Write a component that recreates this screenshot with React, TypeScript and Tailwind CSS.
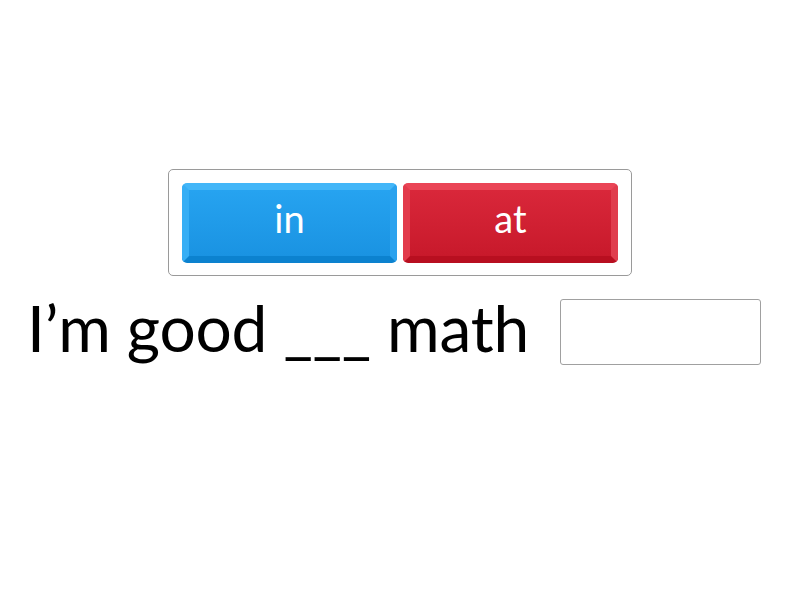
import React from 'react';

function Tile({ label, tone }: { label: string; tone: 'blue' | 'red' }) {
    const cls =
        tone === 'blue'
            ? 'bg-gradient-to-b from-[#26a3f0] to-[#1a93e2] border-t-[#43b6f8] border-l-[#36aef5] border-r-[#2aa2ee] border-b-[#0c82cf]'
            : 'bg-gradient-to-b from-[#d9273a] to-[#c8192b] border-t-[#ea4556] border-l-[#e23a4b] border-r-[#e03d4d] border-b-[#b80f20]';
    return (
        <button className={`w-[215px] h-[80px] rounded-[5px] border-[7px] text-white text-[38px] leading-none flex items-center justify-center ${cls}`}>
            <span className="-mt-[10px]">{label}</span>
        </button>
    );
}

export default function App() {
    return (
        <div className="w-[800px] h-[600px] bg-white font-['Lato','Open_Sans',sans-serif] flex flex-col items-center">
            <div className="mt-[169px] w-[464px] h-[107px] border border-[#9a9a9a] rounded-[5px] px-[13px] pt-[13px] flex gap-[6px]">
                <Tile label="in" tone="blue" />
                <Tile label="at" tone="red" />
            </div>
            <div className="mt-[23px] self-start ml-[27px] flex items-center gap-[31px]">
                <span className="text-[64px] leading-none text-black -mt-[9px] tracking-[-0.2px]">I’m good ___ math</span>
                <div className="w-[201px] h-[66px] border border-[#a0a0a0] rounded-[3px]" />
            </div>
        </div>
    );
}
